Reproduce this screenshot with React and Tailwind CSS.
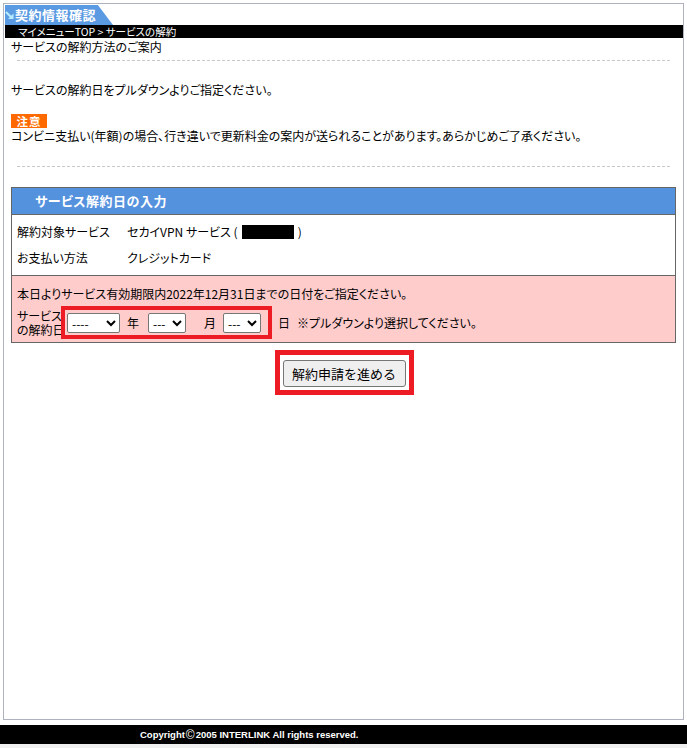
export default function App() {
  return (
    <div
      className="min-h-[748px] bg-white flex flex-col text-[12px] text-black [font-feature-settings:'palt']"
      style={{ fontFamily: '"Noto Sans CJK JP", "Liberation Sans", sans-serif' }}
    >
      {/* outer frame */}
      <div className="mx-[3px] mt-[3px] h-[717px] border border-[#aeb2bc] flex flex-col pl-[1px] pt-[1px]">
        {/* title tab */}
        <div className="h-[20px] w-[108px] bg-[#5a9ae2] [clip-path:polygon(0_0,86%_0,100%_100%,0_100%)] flex items-center">
          <svg width="10" height="12" viewBox="0 0 10 12" className="shrink-0">
            <path d="M1 3 L7 9" stroke="#b8ecff" strokeWidth="2" fill="none" />
            <path d="M3 10 L8.5 10 L8.5 4.5 Z" fill="#b8ecff" />
          </svg>
          <span className="text-white text-[13px] font-bold leading-[18px] tracking-[0.5px] [font-feature-settings:normal]">
            契約情報確認
          </span>
        </div>
        {/* breadcrumb */}
        <div className="h-[13px] bg-black text-white text-[10.5px] leading-[13px] pl-[13px]">
          マイメニューTOP &gt; サービスの解約
        </div>

        <div className="pl-[6px] pr-[1px] flex flex-col">
          <p className="mt-[1px] h-[16px] leading-[16px]">サービスの解約方法のご案内</p>
          <div className="mt-[5px] ml-[6px] mr-[12px] border-t border-dashed border-[#c8c8c8]" />

          <p className="mt-[21px] h-[16px] leading-[16px]">サービスの解約日をプルダウンよりご指定ください。</p>

          <div className="mt-[16px] h-[14px] w-[36px] bg-[#ff6a00] text-white font-bold text-[11.5px] leading-[14px] text-center tracking-[1px]">
            注意
          </div>
          <p className="h-[16px] leading-[16px]">
            コンビニ支払い(年額)の場合、行き違いで更新料金の案内が送られることがあります。あらかじめご了承ください。
          </p>
          <div className="mt-[22px] ml-[6px] mr-[12px] border-t border-dashed border-[#c8c8c8]" />

          {/* input table */}
          <div className="mt-[20px] mr-[6px] border border-[#666666]">
            <div className="h-[26px] bg-[#5592de] text-white font-bold text-[13px] leading-[26px] pl-[23px] tracking-[0.5px]">
              サービス解約日の入力
            </div>
            <div className="border-t border-[#666666] bg-white pt-[4px] pb-[4px] pl-[5px]">
              <div className="flex h-[26px] items-center">
                <span className="w-[110px]">解約対象サービス</span>
                <span className="flex items-center">
                  セカイVPN サービス (
                  <span className="inline-block w-[52px] h-[14px] bg-black mx-[4px]" />
                  )
                </span>
              </div>
              <div className="flex h-[26px] items-center">
                <span className="w-[110px]">お支払い方法</span>
                <span>クレジットカード</span>
              </div>
            </div>
            <div className="border-t border-[#666666] bg-[#ffcccc] pl-[5px] pt-[10px] h-[67px]">
              <p className="h-[16px] leading-[16px]">本日よりサービス有効期限内2022年12月31日までの日付をご指定ください。</p>
              <div className="flex items-center mt-[4px]">
                <div className="w-[44px] leading-[14px] whitespace-nowrap">
                  サービス
                  <br />
                  の解約日
                </div>
                <div className="relative h-[33px] border-[4px] border-[#ed1c24] flex items-center pl-[2px] pr-[7px] bg-[#ffcccc]">
                  <select className="w-[53px] h-[20px] bg-white border border-[#767676] rounded-[2px] text-[12px] leading-none">
                    <option>----</option>
                  </select>
                  <span className="ml-[7px] mr-[9px]">年</span>
                  <select className="w-[38px] h-[20px] bg-white border border-[#767676] rounded-[2px] text-[12px] leading-none">
                    <option>---</option>
                  </select>
                  <span className="ml-[18px] mr-[7px]">月</span>
                  <select className="w-[38px] h-[20px] bg-white border border-[#767676] rounded-[2px] text-[12px] leading-none">
                    <option>---</option>
                  </select>
                </div>
                <span className="ml-[6px]">日</span>
                <span className="ml-[7px]">※プルダウンより選択してください。</span>
              </div>
            </div>
          </div>

          {/* submit */}
          <div className="mt-[7px] flex justify-center pr-[5px]">
            <div className="border-[5px] border-[#ed1c24] pt-[5px] pb-[3px] px-[3px]">
              <button
                type="button"
                className="w-[123px] h-[27px] bg-[#efefef] border border-[#767676] rounded-[3px] text-[13px] leading-none [font-feature-settings:normal]"
              >
                解約申請を進める
              </button>
            </div>
          </div>
        </div>
      </div>

      {/* footer */}
      <div
        className="mt-[5px] h-[19px] bg-black text-white font-bold text-[9.5px] leading-[19px] pl-[140px] flex items-center"
        style={{ fontFamily: '"Liberation Sans", sans-serif' }}
      >
        Copyright<span className="text-[12px] font-normal leading-none mx-[1px]">©</span>2005 INTERLINK All rights reserved.
      </div>
      <div className="flex-1 bg-[#f0f0f0]" />
    </div>
  );
}
